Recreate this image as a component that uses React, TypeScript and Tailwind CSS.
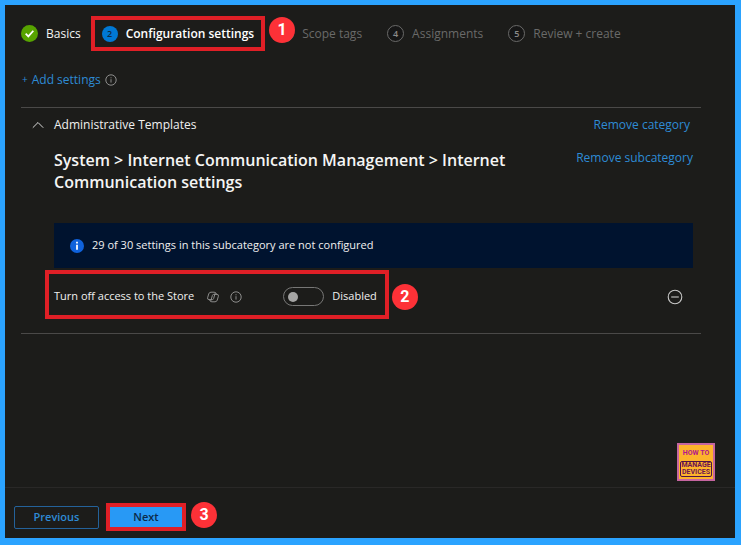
import { useState } from "react";
import type { ReactNode } from "react";
import { clsx } from "clsx";

function Callout({ children, className }: { children: ReactNode; className?: string }) {
  return (
    <span
      className={clsx(
        "flex size-[26px] shrink-0 items-center justify-center rounded-full bg-[#fd3137] font-['Roboto',sans-serif] text-base font-bold text-white",
        className
      )}
    >
      {children}
    </span>
  );
}

function StepNumber({ children }: { children?: ReactNode }) {
  return (
    <span className="flex size-[17px] shrink-0 items-center justify-center rounded-full border border-[#6a6a69] bg-[#161616] text-[9px] font-semibold text-[#8a8a89]">
      {children}
    </span>
  );
}

function InfoIcon({ className }: { className?: string }) {
  return (
    <svg viewBox="0 0 12 12" className={clsx("size-3 shrink-0", className)} fill="none" stroke="currentColor">
      <circle cx="6" cy="6" r="5.2" strokeWidth="0.9" />
      <path d="M6 5.2v3.4M6 3.3v1" strokeWidth="0.9" />
    </svg>
  );
}

function CopilotIcon() {
  return (
    <svg
      viewBox="0 0 14 14"
      className="size-3.5 shrink-0 text-[#8b8b8a]"
      fill="none"
      stroke="currentColor"
      strokeWidth="1"
      strokeLinejoin="round"
    >
      <path d="M6.4 9.6H3Q1.2 9.6 1.6 7.8L2.7 4Q3.2 2.2 5 2.2H8.2Q9.4 2.2 9.1 3.4L7.6 8.6Q7.3 9.6 6.4 9.6Z" />
      <path d="M7.6 4.4H11Q12.8 4.4 12.4 6.2L11.3 10Q10.8 11.8 9 11.8H5.8Q4.6 11.8 4.9 10.6L6.4 5.4Q6.7 4.4 7.6 4.4Z" />
      <path d="M9.1 2.6Q10.2 2.6 10.5 4.4M4.9 11.4Q3.8 11.4 3.5 9.6" />
    </svg>
  );
}

function Steps() {
  return (
    <nav aria-label="Profile steps">
      <ol className="flex h-[35px] items-center text-[12px] text-[#6a6a69]">
        <li className="mr-2.5 flex items-center gap-2 text-[#f3f3f2]">
          <svg viewBox="0 0 16 16" className="size-[17px] shrink-0">
            <circle cx="8" cy="8" r="8" fill="#57a300" />
            <path d="m4.4 8.2 2.5 2.5 4.7-5.3" fill="none" stroke="#fff" strokeWidth="1.7" />
          </svg>
          Basics
        </li>
        <li
          aria-current="step"
          className="flex h-full items-center gap-2 border-4 border-[#e01f26] px-[7px] font-semibold text-white"
        >
          <span className="flex size-4 shrink-0 items-center justify-center rounded-full bg-[#0078d4] text-[9px] text-[#0d2a45]">
            2
          </span>
          Configuration settings
        </li>
        <li className="relative ml-3 flex items-center gap-2">
          <StepNumber />
          Scope tags
          <Callout className="absolute -top-2 -left-2">1</Callout>
        </li>
        <li className="ml-[25px] flex items-center gap-2">
          <StepNumber>4</StepNumber>
          Assignments
        </li>
        <li className="ml-[25px] flex items-center gap-2">
          <StepNumber>5</StepNumber>
          Review + create
        </li>
      </ol>
    </nav>
  );
}

function Setting() {
  const [enabled, setEnabled] = useState(false);

  return (
    <div className="mt-0.5 flex items-center pr-2.5">
      <div className="-ml-[9px] flex h-[49px] items-center border-4 border-[#e01f26] pt-1 pr-2 pl-[5px] text-[11px] text-[#f0f0ef]">
        <span className="whitespace-nowrap">Turn off access to the Store</span>
        <span className="mr-[41px] ml-3 flex items-center gap-2.5">
          <CopilotIcon />
          <InfoIcon className="text-[#9a9a99]" />
        </span>
        <input
          id="store-access"
          type="checkbox"
          role="switch"
          checked={enabled}
          onChange={(e) => setEnabled(e.target.checked)}
          className="flex h-[19px] w-[41px] shrink-0 appearance-none items-center rounded-full border border-[#777776] px-1 before:size-2.5 before:rounded-full before:bg-[#a5a5a4] checked:justify-end"
        />
        <label htmlFor="store-access" className="ml-2 whitespace-nowrap">
          {enabled ? "Enabled" : "Disabled"}
        </label>
      </div>
      <Callout className="mt-1 ml-[3px]">2</Callout>
      <button type="button" aria-label="Remove setting" className="mt-1 ml-auto text-[#c8c8c7]">
        <svg viewBox="0 0 16 16" className="size-4" fill="none" stroke="currentColor">
          <circle cx="8" cy="8" r="6.8" strokeWidth="1.1" />
          <path d="M4.2 8h7.6" strokeWidth="1.1" />
        </svg>
      </button>
    </div>
  );
}

function Logo() {
  return (
    <div className="absolute right-5 bottom-[57px] flex size-[38px] flex-col items-center border-2 border-[#c565a0] bg-[#fdb32b] px-px pt-1 font-['Roboto',sans-serif] font-bold">
      <span className="text-[7px] leading-2 whitespace-nowrap text-[#b3168c]">HOW TO</span>
      <span className="mt-1 flex w-full flex-col items-center rounded-xs border border-[#4d1248] text-[7px] leading-[7px] text-[#6d1450]">
        <span>MANAGE</span>
        <span>DEVICES</span>
      </span>
    </div>
  );
}

export default function App() {
  return (
    <div className="relative flex min-h-screen flex-col border-[5px] border-r-[6px] border-b-[7px] border-[#2ba3ff] bg-[#1c1c1a] font-['Open_Sans','Noto_Sans',sans-serif] text-[#f0f0ef]">
      <main className="flex-1 pt-[11px] pr-[34px] pl-4">
        <Steps />

        <div className="mt-[19px] mb-[18px] flex h-[19px] items-center gap-1 pl-px text-[12px]">
          <a href="#add" className="flex items-center gap-1 text-[#2e8bd5]">
            <span className="text-[10px]">+</span> Add settings
          </a>
          <InfoIcon className="text-[#9a9a99]" />
        </div>

        <section className="border-y border-[#4a4948] pb-[14px]">
          <div className="flex h-[34px] items-center justify-between pr-[11px] pl-[11px]">
            <button type="button" aria-expanded="true" className="flex items-center gap-2.5 text-[12px]">
              <svg viewBox="0 0 12 12" className="size-3" fill="none" stroke="currentColor">
                <path d="m0.8 8.7 5.2-5.2 5.2 5.2" strokeWidth="0.9" />
              </svg>
              Administrative Templates
            </button>
            <a href="#category" className="text-[12px] text-[#2e8bd5]">
              Remove category
            </a>
          </div>

          <div className="pr-2 pl-[33px]">
            <div className="mt-[7px] flex justify-between gap-6">
              <h2 className="flex-1 text-[16px] leading-[22px] font-semibold text-[#f5f5f4]">
                System &gt; Internet Communication Management &gt; Internet Communication settings
              </h2>
              <a href="#subcategory" className="text-[12px] leading-[18px] text-[#2e8bd5]">
                Remove subcategory
              </a>
            </div>

            <div className="mt-[30px] flex h-[45px] items-center gap-2 bg-[#00132f] pl-4 text-[11px]">
              <svg viewBox="0 0 14 14" className="size-3.5 shrink-0">
                <circle cx="7" cy="7" r="7" fill="#0f62dc" />
                <path d="M7 5.7v5M7 2.8v1.8" stroke="#fff" strokeWidth="1.8" />
              </svg>
              29 of 30 settings in this subcategory are not configured
            </div>

            <Setting />
          </div>
        </section>
      </main>

      <Logo />

      <footer className="flex h-[51px] items-center border-t border-[#292827] pt-2 pl-[9px] text-[11px] font-semibold">
        <button type="button" className="h-[23px] w-[85px] rounded-xs border border-[#24629a] text-[#2e8bd5]">
          Previous
        </button>
        <span className="ml-[7px] flex h-7 w-[80px] border-4 border-[#e01f26]">
          <button type="button" className="flex-1 bg-[#2899f5] text-[#0c2b4a]">
            Next
          </button>
        </span>
        <Callout className="-mt-1 ml-[5px]">3</Callout>
      </footer>
    </div>
  );
}
